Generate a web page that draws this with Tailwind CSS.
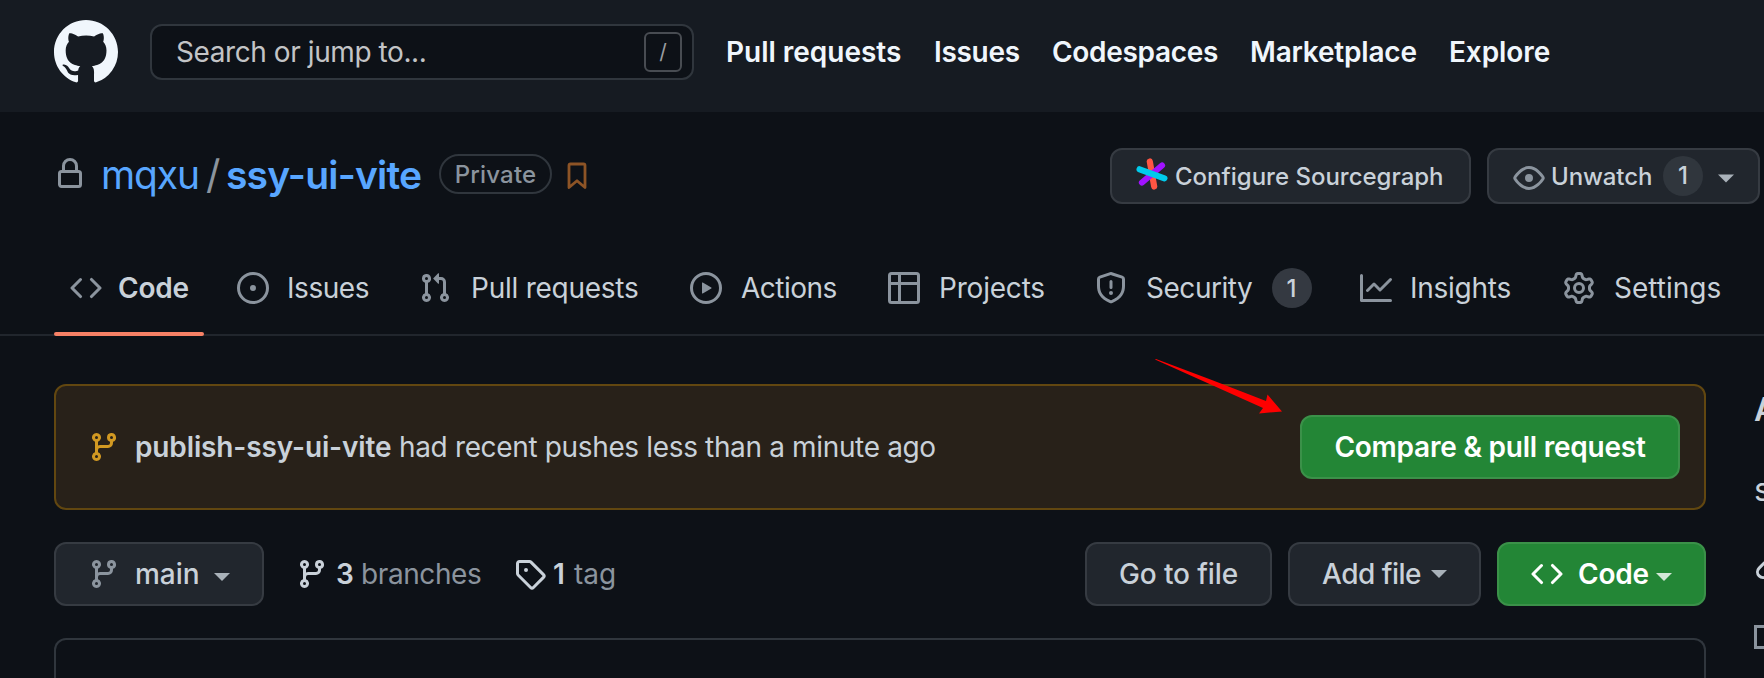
<!DOCTYPE html>
<html lang="en">
<head>
<meta charset="utf-8">
<title>mqxu/ssy-ui-vite</title>
<script src="https://cdn.jsdelivr.net/npm/@tailwindcss/browser@4"></script>
</head>
<body class="relative h-[678px] w-[1764px] overflow-hidden bg-[#0d1117] font-['Inter',sans-serif] text-[28px] leading-10 whitespace-nowrap text-[#c9d1d9]">

<svg class="hidden">
  <symbol id="branch" viewBox="0 0 16 16"><path fill-rule="evenodd" d="M11.75 2.5a.75.75 0 100 1.5.75.75 0 000-1.5zm-2.25.75a2.25 2.25 0 113 2.122V6A2.5 2.5 0 0110 8.5H6a1 1 0 00-1 1v1.128a2.251 2.251 0 11-1.5 0V5.372a2.25 2.25 0 111.5 0v1.836A2.492 2.492 0 016 7h4a1 1 0 001-1v-.628A2.25 2.25 0 019.5 3.25zM4.25 12a.75.75 0 100 1.5.75.75 0 000-1.5zM3.5 3.25a.75.75 0 111.5 0 .75.75 0 01-1.5 0z"/></symbol>
  <symbol id="code" viewBox="0 0 16 16"><path fill-rule="evenodd" d="M4.72 3.22a.75.75 0 011.06 1.06L2.06 8l3.72 3.72a.75.75 0 11-1.06 1.06L.47 8.53a.75.75 0 010-1.06l4.25-4.25zm6.56 0a.75.75 0 10-1.06 1.06L13.94 8l-3.72 3.72a.75.75 0 101.06 1.06l4.25-4.25a.75.75 0 000-1.06l-4.25-4.25z"/></symbol>
  <symbol id="caret" viewBox="0 0 16 8"><path d="M0 0h16L8 8z"/></symbol>
</svg>

<header class="flex h-28 items-center bg-[#161b22] pb-2 pl-[54px]">
  <svg class="size-16 shrink-0 fill-[#f0f6fc]" viewBox="0 0 16 16"><path fill-rule="evenodd" d="M8 0C3.58 0 0 3.58 0 8c0 3.54 2.29 6.53 5.47 7.59.4.07.55-.17.55-.38 0-.19-.01-.82-.01-1.49-2.01.37-2.53-.49-2.69-.94-.09-.23-.48-.94-.82-1.13-.28-.15-.68-.52-.01-.53.63-.01 1.08.58 1.23.82.72 1.21 1.87.87 2.33.66.07-.52.28-.87.51-1.07-1.78-.2-3.64-.89-3.64-3.95 0-.87.31-1.59.82-2.15-.08-.2-.36-1.02.08-2.12 0 0 .67-.21 2.2.82.64-.18 1.32-.27 2-.27.68 0 1.36.09 2 .27 1.53-1.04 2.2-.82 2.2-.82.44 1.1.16 1.92.08 2.12.51.56.82 1.27.82 2.15 0 3.07-1.87 3.75-3.65 3.95.29.25.54.73.54 1.48 0 1.07-.01 1.93-.01 2.2 0 .21.15.46.55.38A8.013 8.013 0 0016 8c0-4.42-3.58-8-8-8z"/></svg>
  <div class="ml-8 flex h-14 w-[544px] items-center justify-between rounded-xl border-2 border-[#30363d] bg-[#0d1117] pr-2.5 pl-[24px]">
    <span class="tracking-[-0.42px] text-[#c3c4c6]">Search or jump to...</span>
    <span class="flex h-10 w-[38px] items-center justify-center rounded-md border-2 border-[#484c52] text-[21px] text-[#9a9da1]">/</span>
  </div>
  <nav class="ml-[32px] flex font-semibold text-[#f0f6fc]">
    <a class="w-[208px] tracking-[-0.02px]">Pull requests</a>
    <a class="w-[118px] tracking-[-0.3px]">Issues</a>
    <a class="w-[198px] tracking-[-0.31px]">Codespaces</a>
    <a class="w-[199px] tracking-[-0.2px]">Marketplace</a>
    <a class="tracking-[-0.1px]">Explore</a>
  </nav>
</header>

<section class="flex h-32 items-center pl-[54px]">
  <div class="flex w-[1056px] items-center pb-1">
    <svg class="mr-[15px] size-8 fill-[#8b949e]" viewBox="0 0 16 16"><path fill-rule="evenodd" d="M4 4v2h-.25A1.75 1.75 0 002 7.75v5.5c0 .966.784 1.75 1.75 1.75h8.5A1.75 1.75 0 0014 13.25v-5.5A1.75 1.75 0 0012.25 6H12V4a4 4 0 10-8 0zm6.5 2V4a2.5 2.5 0 10-5 0v2h5zM3.75 7.5a.25.25 0 00-.25.25v5.5c0 .138.112.25.25.25h8.5a.25.25 0 00.25-.25v-5.5a.25.25 0 00-.25-.25z"/></svg>
    <span class="w-[105px] pt-0.5 text-[39px] tracking-[-1.1px] text-[#58a6ff]">mqxu</span>
    <span class="w-[20px] pt-0.5 text-[40px] text-[#8b949e]">/</span>
    <span class="w-[213px] pt-0.5 text-[39px] font-semibold tracking-[-0.8px] text-[#58a6ff]">ssy-ui-vite</span>
    <span class="flex h-10 w-[113px] items-center justify-center rounded-full border-2 border-[#30363d] pt-px text-2xl font-medium tracking-[0.2px] text-[#8b949e]">Private</span>
    <svg class="mt-1 ml-[15px] h-7 w-5" viewBox="0 0 20 28" fill="none" stroke="#8d5426" stroke-width="2.8" stroke-linejoin="round"><path d="M2 25.5V3.5q0-1.5 1.5-1.5H16.5q1.5 0 1.5 1.5V25.5L10 18.8z"/></svg>
  </div>
  <div class="flex gap-4 text-2xl font-[550]">
    <a class="flex h-14 w-[361px] items-center rounded-xl border-2 border-[#363b42] bg-[#21262d] pl-6">
      <svg class="mr-[7px] mb-1 size-8" viewBox="0 0 32 32" fill="none" stroke-width="6.2" stroke-linecap="round"><path stroke="#ff5543" d="M13.8 3.5L18.2 28.5"/><path stroke="#a112ff" d="M26 7.5L6 24.5"/><path stroke="#00cbec" d="M3.6 11.3L28.4 20.3"/></svg>
      <span class="pt-0.5">Configure Sourcegraph</span>
    </a>
    <a class="flex h-14 w-[273px] items-center rounded-xl border-2 border-[#363b42] bg-[#21262d] pl-6">
      <svg class="mt-1 size-8 fill-[#8b949e]" viewBox="0 0 16 16"><path fill-rule="evenodd" d="M1.679 7.932c.412-.621 1.242-1.75 2.366-2.717C5.175 4.242 6.527 3.5 8 3.5c1.473 0 2.824.742 3.955 1.715 1.124.967 1.954 2.096 2.366 2.717a.119.119 0 010 .136c-.412.621-1.242 1.75-2.366 2.717C10.825 11.758 9.473 12.5 8 12.5c-1.473 0-2.824-.742-3.955-1.715C2.92 9.818 2.09 8.69 1.679 8.068a.119.119 0 010-.136zM8 2c-1.981 0-3.67.992-4.933 2.078C1.797 5.169.88 6.423.43 7.1a1.619 1.619 0 000 1.798c.45.678 1.367 1.932 2.637 3.024C4.329 13.008 6.019 14 8 14c1.981 0 3.67-.992 4.933-2.078 1.27-1.091 2.187-2.345 2.637-3.023a1.619 1.619 0 000-1.798c-.45-.678-1.367-1.932-2.637-3.023C11.671 2.992 9.981 2 8 2zm0 8a2 2 0 100-4 2 2 0 000 4z"/></svg>
      <span class="ml-1.5 w-[112px] pt-0.5 tracking-[-0.1px]">Unwatch</span>
      <span class="flex size-10 items-center justify-center rounded-full bg-[#30363d]">1</span>
      <svg class="mt-1 ml-[15px] h-[9px] w-4 fill-[#a9b1b9]"><use href="#caret"/></svg>
    </a>
  </div>
</section>

<nav class="flex h-24 items-center border-b-2 border-[#21262d] pt-0.5 pl-[54px]">
  <a class="relative flex h-full w-[150px] items-center pl-4 font-semibold tracking-[-0.2px]">
    <svg class="mr-4 size-8 fill-[#8b949e]"><use href="#code"/></svg>Code
    <span class="absolute -bottom-0.5 left-0 h-1 w-full rounded-sm bg-[#f78166]"></span>
  </a>
  <a class="flex w-[182px] items-center pl-[33px] tracking-[-0.45px]">
    <svg class="mr-[18px] size-8 fill-[#8b949e]" viewBox="0 0 16 16"><path d="M8 9.5a1.5 1.5 0 100-3 1.5 1.5 0 000 3z"/><path fill-rule="evenodd" d="M8 0a8 8 0 100 16A8 8 0 008 0zM1.5 8a6.5 6.5 0 1113 0 6.5 6.5 0 01-13 0z"/></svg>Issues
  </a>
  <a class="flex w-[270px] items-center pl-[33px] tracking-[-0.25px]">
    <svg class="mr-5 size-8 fill-[#8b949e]" viewBox="0 0 16 16"><path fill-rule="evenodd" d="M7.177 3.073L9.573.677A.25.25 0 0110 .854v4.792a.25.25 0 01-.427.177L7.177 3.427a.25.25 0 010-.354zM3.75 2.5a.75.75 0 100 1.5.75.75 0 000-1.5zm-2.25.75a2.25 2.25 0 113 2.122v5.256a2.251 2.251 0 11-1.5 0V5.372A2.25 2.25 0 011.5 3.25zM11 2.5h-1V4h1a1 1 0 011 1v5.628a2.251 2.251 0 101.5 0V5A2.5 2.5 0 0011 2.5zm1 10.25a.75.75 0 111.5 0 .75.75 0 01-1.5 0zM3.75 12a.75.75 0 100 1.5.75.75 0 000-1.5z"/></svg>Pull requests
  </a>
  <a class="flex w-[200px] items-center pl-[34px] tracking-[-0.51px]">
    <svg class="mr-[19px] size-8 fill-[#8b949e]" viewBox="0 0 16 16"><path fill-rule="evenodd" d="M1.5 8a6.5 6.5 0 1113 0 6.5 6.5 0 01-13 0zM8 0a8 8 0 100 16A8 8 0 008 0zM6.379 5.227A.25.25 0 006 5.442v5.117a.25.25 0 00.379.214l4.264-2.559a.25.25 0 000-.428L6.379 5.227z"/></svg>Actions
  </a>
  <a class="flex w-[206px] items-center pl-8 tracking-[-0.2px]">
    <svg class="mr-[19px] size-8" viewBox="0 0 32 32" fill="none" stroke="#8b949e" stroke-width="3"><rect x="1.5" y="1.5" width="29" height="29" rx="2"/><path d="M1.5 11.5H30.5M11.5 1.5V30.5"/></svg>Projects
  </a>
  <a class="flex w-[266px] items-center pl-[33px] tracking-[-0.47px]">
    <svg class="mr-[19px] size-8 fill-[#8b949e]" viewBox="0 0 16 16"><path fill-rule="evenodd" d="M7.467.133a1.75 1.75 0 011.066 0l5.25 1.68A1.75 1.75 0 0115 3.48V7c0 1.566-.32 3.182-1.303 4.682-.983 1.498-2.585 2.813-5.032 3.855a1.7 1.7 0 01-1.33 0c-2.447-1.042-4.049-2.357-5.032-3.855C1.32 10.182 1 8.566 1 7V3.48a1.75 1.75 0 011.217-1.667l5.25-1.68zm.61 1.429a.25.25 0 00-.153 0l-5.25 1.68a.25.25 0 00-.174.238V7c0 1.358.275 2.666 1.057 3.86.784 1.194 2.121 2.34 4.366 3.297a.2.2 0 00.154 0c2.245-.956 3.582-2.104 4.366-3.298C13.225 9.666 13.5 8.36 13.5 7V3.48a.25.25 0 00-.174-.237l-5.25-1.68zM9 10.5a1 1 0 11-2 0 1 1 0 012 0zM8.75 4.75a.75.75 0 00-1.5 0v3a.75.75 0 001.5 0v-3z"/></svg>Security
    <span class="ml-[20px] flex size-10 items-center justify-center rounded-full bg-[#343941] pt-px pr-0.5 text-2xl font-medium">1</span>
  </a>
  <a class="flex w-[203px] items-center pl-8 tracking-[-0.25px]">
    <svg class="mr-[18px] size-8 fill-[#8b949e]" viewBox="0 0 16 16"><path fill-rule="evenodd" d="M1.5 1.75a.75.75 0 00-1.5 0v12.5c0 .414.336.75.75.75h14.5a.75.75 0 000-1.5H1.5V1.75zm14.28 2.53a.75.75 0 00-1.06-1.06L10 7.94 7.53 5.47a.75.75 0 00-1.06 0L3.22 8.72a.75.75 0 001.06 1.06L7 7.06l2.47 2.47a.75.75 0 001.06 0l5.25-5.25z"/></svg>Insights
  </a>
  <a class="flex items-center pl-8">
    <svg class="mr-[19px] size-8 fill-[#8b949e]" viewBox="0 0 16 16"><path fill-rule="evenodd" d="M7.429 1.525a6.593 6.593 0 011.142 0c.036.003.108.036.137.146l.289 1.105c.147.56.55.967.997 1.189.174.086.341.183.501.29.417.278.97.423 1.53.27l1.102-.303c.11-.03.175.016.195.046.219.31.41.641.573.989.014.031.022.11-.059.19l-.815.806c-.411.406-.562.957-.53 1.456a4.588 4.588 0 010 .582c-.032.499.119 1.05.53 1.456l.815.806c.08.08.073.159.059.19a6.494 6.494 0 01-.573.99c-.02.029-.086.074-.195.045l-1.103-.303c-.559-.153-1.112-.008-1.529.27-.16.107-.327.204-.5.29-.449.222-.851.628-.998 1.189l-.289 1.105c-.029.11-.101.143-.137.146a6.613 6.613 0 01-1.142 0c-.036-.003-.108-.037-.137-.146l-.289-1.105c-.147-.56-.55-.967-.997-1.189a4.502 4.502 0 01-.501-.29c-.417-.278-.97-.423-1.53-.27l-1.102.303c-.11.03-.175-.016-.195-.046a6.492 6.492 0 01-.573-.989c-.014-.031-.022-.11.059-.19l.815-.806c.411-.406.562-.957.53-1.456a4.587 4.587 0 010-.582c.032-.499-.119-1.05-.53-1.456l-.815-.806c-.08-.08-.073-.159-.059-.19a6.44 6.44 0 01.573-.99c.02-.029.086-.075.195-.045l1.103.303c.559.153 1.112.008 1.529-.27.16-.107.327-.204.5-.29.449-.222.851-.628.998-1.189l.289-1.105c.029-.11.101-.143.137-.146zM8 0c-.236 0-.47.01-.701.03-.743.065-1.29.615-1.458 1.261l-.29 1.106c-.017.066-.078.158-.211.224a5.994 5.994 0 00-.668.386c-.123.082-.233.09-.3.071L3.27 2.776c-.644-.177-1.392.02-1.82.63a7.977 7.977 0 00-.704 1.217c-.315.675-.111 1.422.363 1.891l.815.806c.05.048.098.147.088.294a6.084 6.084 0 000 .772c.01.147-.038.246-.088.294l-.815.806c-.474.469-.678 1.216-.363 1.891.2.428.436.835.704 1.218.428.609 1.176.806 1.82.63l1.103-.303c.066-.019.176-.011.299.071.213.143.436.272.668.386.133.066.194.158.212.224l.289 1.106c.169.646.715 1.196 1.458 1.26a8.094 8.094 0 001.402 0c.743-.064 1.29-.614 1.458-1.26l.29-1.106c.017-.066.078-.158.211-.224a5.98 5.98 0 00.668-.386c.123-.082.233-.09.3-.071l1.102.302c.644.177 1.392-.02 1.82-.63.268-.382.505-.789.704-1.217.315-.675.111-1.422-.364-1.891l-.814-.806c-.05-.048-.098-.147-.088-.294a6.1 6.1 0 000-.772c-.01-.147.039-.246.088-.294l.814-.806c.475-.469.679-1.216.364-1.891a7.992 7.992 0 00-.704-1.218c-.428-.609-1.176-.806-1.82-.63l-1.103.303c-.066.019-.176.011-.299-.071a5.991 5.991 0 00-.668-.386c-.133-.066-.194-.158-.212-.224L10.16 1.29C9.99.645 9.444.095 8.701.031A8.094 8.094 0 008 0zm1.5 8a1.5 1.5 0 11-3 0 1.5 1.5 0 013 0zM11 8a3 3 0 11-6 0 3 3 0 016 0z"/></svg>Settings
  </a>
</nav>

<div class="flex pt-12 pl-[54px]">
  <main class="flex w-[1652px] shrink-0 flex-col gap-8">
    <div class="flex h-[126px] items-center rounded-xl border-2 border-[#624710] bg-[#282119] pl-8">
      <svg class="size-8 fill-[#d29922]"><use href="#branch"/></svg>
      <span class="ml-[15px] w-[264px] font-semibold tracking-[-0.13px]">publish-ssy-ui-vite</span>
      <span class="w-[901px] tracking-[-0.35px]">had recent pushes less than a minute ago</span>
      <a class="flex h-16 w-[380px] items-center justify-center rounded-xl border-2 border-[#3b9149] bg-[#238636] font-semibold tracking-[-0.23px] text-white">Compare &amp; pull request</a>
    </div>
    <div class="flex h-16 items-center">
      <a class="flex h-16 w-[210px] items-center rounded-xl border-2 border-[#363b42] bg-[#21262d] pl-8 font-[550]">
        <svg class="size-8 fill-[#8b949e]"><use href="#branch"/></svg>
        <span class="ml-[15px] w-[79px]">main</span>
        <svg class="mt-1.5 h-2 w-4 fill-[#a9b1b9]"><use href="#caret"/></svg>
      </a>
      <a class="ml-8 flex items-center">
        <svg class="size-8 fill-[#c9d1d9]"><use href="#branch"/></svg>
        <b class="ml-2 w-[25px] font-semibold">3</b>
        <span class="w-[153px] tracking-[-0.4px] text-[#8b949e]">branches</span>
      </a>
      <a class="flex items-center">
        <svg class="size-8 fill-[#c9d1d9]" viewBox="0 0 16 16"><path fill-rule="evenodd" d="M2.5 7.775V2.75a.25.25 0 01.25-.25h5.025a.25.25 0 01.177.073l6.25 6.25a.25.25 0 010 .354l-5.025 5.025a.25.25 0 01-.354 0l-6.25-6.25a.25.25 0 01-.073-.177zm-1.5 0V2.75C1 1.784 1.784 1 2.75 1h5.025c.464 0 .91.184 1.238.513l6.25 6.25a1.75 1.75 0 010 2.474l-5.026 5.026a1.75 1.75 0 01-2.474 0l-6.25-6.25A1.75 1.75 0 011 7.775zM6 5a1 1 0 100 2 1 1 0 000-2z"/></svg>
        <b class="ml-[7px] w-[21px] font-semibold">1</b>
        <span class="text-[#8b949e]">tag</span>
      </a>
      <div class="ml-auto flex gap-4 font-[550]">
        <a class="flex h-16 w-[187px] items-center justify-center rounded-xl border-2 border-[#363b42] bg-[#21262d] tracking-[-0.1px]">Go to file</a>
        <a class="flex h-16 w-[193px] items-center rounded-xl border-2 border-[#363b42] bg-[#21262d] pl-8 tracking-[-0.5px]"><span class="w-[109px]">Add file</span><svg class="h-2 w-4 fill-[#a9b1b9]"><use href="#caret"/></svg></a>
        <a class="flex h-16 w-[209px] items-center rounded-xl border-2 border-[#3b9149] bg-[#238636] pl-8 tracking-[-0.25px] text-white"><svg class="size-8 fill-white"><use href="#code"/></svg><span class="ml-[15px] w-[78px] font-semibold">Code</span><svg class="mt-1.5 h-2 w-4 fill-[#d3e7d7]"><use href="#caret"/></svg></a>
      </div>
    </div>
    <div class="h-16 rounded-t-xl border-2 border-b-0 border-[#30363d]"></div>
  </main>
  <aside class="ml-12 w-[10px] overflow-hidden text-[32px]">
    <h2 class="h-12 pt-0.5 leading-[48px] font-semibold">A</h2>
    <p class="mt-8 h-12 pt-0.5 leading-[48px]">s</p>
    <svg class="mt-[37px] size-8 max-w-none fill-[#c9d1d9]" viewBox="0 0 16 16"><path fill-rule="evenodd" d="M7.775 3.275a.75.75 0 001.06 1.06l1.25-1.25a2 2 0 112.83 2.83l-2.5 2.5a2 2 0 01-2.83 0 .75.75 0 00-1.06 1.06 3.5 3.5 0 004.95 0l2.5-2.5a3.5 3.5 0 00-4.95-4.95l-1.25 1.25zm-4.69 9.64a2 2 0 010-2.83l2.5-2.5a2 2 0 012.83 0 .75.75 0 001.06-1.06 3.5 3.5 0 00-4.95 0l-2.5 2.5a3.5 3.5 0 004.95 4.95l1.25-1.25a.75.75 0 00-1.06-1.06l-1.25 1.25a2 2 0 01-2.83 0z"/></svg>
    <svg class="mt-11 h-6 w-8 max-w-none" viewBox="0 0 32 24" fill="none" stroke="#8b949e" stroke-width="3"><path d="M30.5 1.5H1.5V22.5H30.5z"/></svg>
  </aside>
</div>

<!-- Arrow pointing at the compare button -->
<svg class="absolute top-[355px] left-[1150px] h-[64px] w-[140px] fill-[#fe0000]" viewBox="0 0 140 64"><path d="M5 4.5L6 4Q60 24 116 46L117.500 39.5L132 56.5L109 58.5L113 53z"/></svg>
</body>
</html>
